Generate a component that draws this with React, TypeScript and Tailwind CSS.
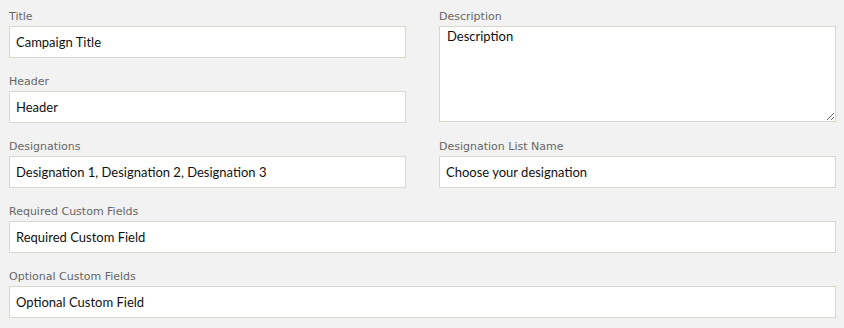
const labelCls =
  "block h-[17px] text-[11px] leading-[16px] text-[#666] font-['DejaVu_Sans',Verdana,sans-serif]";
const inputCls =
  "block w-full h-[32px] px-[6px] bg-white border border-[#d8d8cd] text-[13px] text-[#111] font-['Lato',sans-serif] outline-none";

function Field({ label, value }: { label: string; value: string }) {
  return (
    <div className="flex flex-col">
      <label className={labelCls}>{label}</label>
      <input className={inputCls} defaultValue={value} />
    </div>
  );
}

export default function App() {
  return (
    <div className="w-[844px] h-[328px] bg-[#f2f2f2] pt-[9px] pl-[9px] pr-[8px]">
      <div className="grid grid-cols-2 gap-x-[33px] gap-y-[16px]">
        <div className="flex flex-col gap-[16px]">
          <Field label="Title" value="Campaign Title" />
          <Field label="Header" value="Header" />
        </div>
        <div className="flex flex-col">
          <label className={labelCls}>Description</label>
          <textarea
            className="block w-full h-[96px] px-[7px] pt-0 bg-white border border-[#d8d8cd] text-[13px] leading-[18px] text-[#111] font-['Lato',sans-serif] outline-none"
            defaultValue="Description"
          />
        </div>
        <Field label="Designations" value="Designation 1, Designation 2, Designation 3" />
        <Field label="Designation List Name" value="Choose your designation" />
        <div className="col-span-2">
          <Field label="Required Custom Fields" value="Required Custom Field" />
        </div>
        <div className="col-span-2">
          <Field label="Optional Custom Fields" value="Optional Custom Field" />
        </div>
      </div>
    </div>
  );
}
